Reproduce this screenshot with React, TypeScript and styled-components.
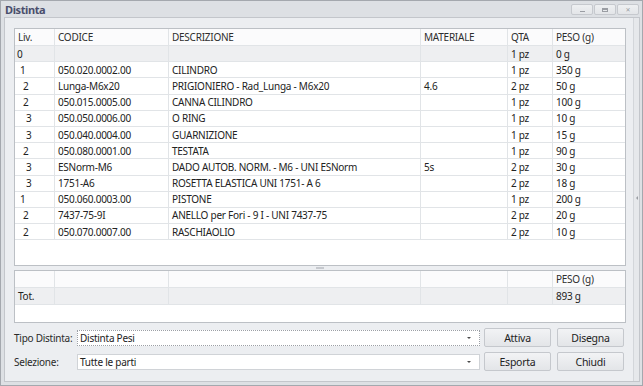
import React from 'react';
import styled, { createGlobalStyle } from 'styled-components';

const FONT = '"Noto Sans", "DejaVu Sans", sans-serif';

const GlobalStyle = createGlobalStyle`
  html, body { margin: 0; padding: 0; background: #ffffff; }
  * { box-sizing: border-box; }
  body { font-family: ${FONT}; font-size: 10px; color: #222222; letter-spacing: -0.25px; }
`;

const COLS = '40px 114px 252px 87px 45px 1fr';

const Window = styled.div`
  width: 643px;
  height: 386px;
  border: 1px solid #a4a8ae;
  background: #dde0e4;
  padding: 0 2px 3px 3px;
  display: flex;
  flex-direction: column;
`;

const TitleBar = styled.div`
  height: 16px;
  display: flex;
  align-items: flex-start;
  justify-content: space-between;
  padding: 0 1px 0 1px;
`;

const Title = styled.div`
  font-family: "Noto Sans", sans-serif;
  font-weight: bold;
  font-size: 11px;
  line-height: 17px;
  color: #4a4e6c;
  letter-spacing: -0.4px;
`;

const TitleButtons = styled.div`
  display: flex;
  gap: 1px;
  padding-top: 3px;
`;

const TitleButton = styled.div`
  width: 22px;
  height: 11px;
  border: 1px solid #c6c9ce;
  border-radius: 2px;
  background: linear-gradient(#eef0f2, #e3e5e8);
  display: flex;
  align-items: center;
  justify-content: center;
`;

const MinGlyph = styled.div`
  width: 5px;
  height: 1px;
  margin-top: 3px;
  background: #9a9da3;
`;

const MaxGlyph = styled.div`
  width: 6px;
  height: 4px;
  border: 1px solid #9a9da3;
  border-top-width: 2px;
`;

const CloseGlyph = styled.div`
  font-family: "DejaVu Sans", sans-serif;
  font-size: 6px;
  line-height: 7px;
  color: #9a9da3;
`;

const Body = styled.div`
  flex: 1;
  display: flex;
  border: 1px solid #c3c6cb;
  background: #eceef1;
`;

const Main = styled.div`
  flex: 1;
  display: flex;
  flex-direction: column;
  padding: 10px 7px 10px 9px;
`;

const Strip = styled.div`
  width: 6px;
  border-left: 1px solid #d3d6da;
  background: #e6e8eb;
  display: flex;
  align-items: center;
  justify-content: center;
`;

const StripArrow = styled.div`
  width: 0;
  height: 0;
  border-top: 2px solid transparent;
  border-bottom: 2px solid transparent;
  border-right: 2px solid #9a9da3;
  margin-top: -3px;
`;

const Grid = styled.div<{ $height: number }>`
  height: ${p => p.$height}px;
  border: 1px solid #bcc0c5;
  background: #ffffff;
  display: flex;
  flex-direction: column;
  overflow: hidden;
`;

const Row = styled.div<{ $height: number; $shade?: boolean }>`
  display: grid;
  grid-template-columns: ${COLS};
  height: ${p => p.$height}px;
  flex: none;
  border-bottom: 1px solid #e1e4e7;
  background: ${p => (p.$shade ? '#eeeff1' : '#ffffff')};
`;

const HeaderRow = styled(Row)`
  background: #fbfbfc;
  border-bottom: 1px solid #e1e4e7;
`;

const Cell = styled.div<{ $indent?: number }>`
  border-right: 1px solid #e1e4e7;
  padding: 0 3px 0 ${p => (p.$indent !== undefined ? p.$indent : 3)}px;
  display: flex;
  align-items: center;
  white-space: nowrap;
  overflow: hidden;
  font-size: 10px;
  color: #222222;
  &:last-child { border-right: none; }
`;

const HeadCell = styled(Cell)`
  color: #2e2e2e;
`;

const Splitter = styled.div`
  height: 4px;
  display: flex;
  align-items: center;
  justify-content: center;
`;

const SplitHandle = styled.div`
  width: 8px;
  height: 2px;
  background: #c6c9ce;
`;

const Controls = styled.div`
  margin-top: 5px;
  display: grid;
  grid-template-columns: 59px 403px 67px 69px;
  grid-template-rows: 19px 19px;
  column-gap: 4px;
  row-gap: 5px;
  align-items: center;
  & > :nth-child(4n) { margin-left: 2px; }
`;

const Label = styled.div`
  font-size: 10px;
  color: #2a2a2a;
  white-space: nowrap;
`;

const Combo = styled.div<{ $focused?: boolean }>`
  height: 16px;
  display: flex;
  align-items: stretch;
  background: #ffffff;
  border: 1px ${p => (p.$focused ? 'dotted #9ca0a6' : 'solid #d0d3d7')};
`;

const ComboText = styled.div`
  flex: 1;
  padding-left: 2px;
  display: flex;
  align-items: center;
  font-size: 10px;
  color: #222222;
`;

const ComboArrow = styled.div`
  width: 17px;
  display: flex;
  align-items: center;
  justify-content: center;
  padding-right: 3px;
  &::after {
    content: '';
    width: 0;
    height: 0;
    border-left: 2px solid transparent;
    border-right: 2px solid transparent;
    border-top: 2px solid #4a4a4a;
  }
`;

const Button = styled.div`
  height: 19px;
  border: 1px solid #c5c8cd;
  border-radius: 2px;
  background: linear-gradient(#f2f3f5, #e3e5e8);
  display: flex;
  align-items: center;
  justify-content: center;
  font-size: 10.5px;
  color: #222222;
`;

type Item = [number, string, string, string, string, string];

const ITEMS: Item[] = [
  [0, '', '', '', '1 pz', '0 g'],
  [1, '050.020.0002.00', 'CILINDRO', '', '1 pz', '350 g'],
  [2, 'Lunga-M6x20', 'PRIGIONIERO - Rad_Lunga - M6x20', '4.6', '2 pz', '50 g'],
  [2, '050.015.0005.00', 'CANNA CILINDRO', '', '1 pz', '100 g'],
  [3, '050.050.0006.00', 'O RING', '', '1 pz', '10 g'],
  [3, '050.040.0004.00', 'GUARNIZIONE', '', '1 pz', '15 g'],
  [2, '050.080.0001.00', 'TESTATA', '', '1 pz', '90 g'],
  [3, 'ESNorm-M6', 'DADO AUTOB. NORM. - M6 - UNI ESNorm', '5s', '2 pz', '30 g'],
  [3, '1751-A6', 'ROSETTA ELASTICA UNI 1751- A 6', '', '2 pz', '18 g'],
  [1, '050.060.0003.00', 'PISTONE', '', '1 pz', '200 g'],
  [2, '7437-75-9I', 'ANELLO per Fori - 9 I - UNI 7437-75', '', '2 pz', '20 g'],
  [2, '050.070.0007.00', 'RASCHIAOLIO', '', '2 pz', '10 g'],
];

const HEADERS = ['Liv.', 'CODICE', 'DESCRIZIONE', 'MATERIALE', 'QTA', 'PESO (g)'];

export default function App() {
  return (
    <>
      <GlobalStyle />
      <Window>
        <TitleBar>
          <Title>Distinta</Title>
          <TitleButtons>
            <TitleButton><MinGlyph /></TitleButton>
            <TitleButton><MaxGlyph /></TitleButton>
            <TitleButton><CloseGlyph>✕</CloseGlyph></TitleButton>
          </TitleButtons>
        </TitleBar>
        <Body>
          <Main>
            <Grid $height={238}>
              <HeaderRow $height={17}>
                {HEADERS.map(h => (
                  <HeadCell key={h}>{h}</HeadCell>
                ))}
              </HeaderRow>
              {ITEMS.map((it, i) => (
                <Row key={i} $height={16.2} $shade={i === 0}>
                  <Cell $indent={2 + it[0] * 3}>{it[0]}</Cell>
                  <Cell>{it[1]}</Cell>
                  <Cell>{it[2]}</Cell>
                  <Cell>{it[3]}</Cell>
                  <Cell>{it[4]}</Cell>
                  <Cell>{it[5]}</Cell>
                </Row>
              ))}
            </Grid>
            <Splitter>
              <SplitHandle />
            </Splitter>
            <Grid $height={53}>
              <HeaderRow $height={17}>
                <HeadCell />
                <HeadCell />
                <HeadCell />
                <HeadCell />
                <HeadCell />
                <HeadCell>PESO (g)</HeadCell>
              </HeaderRow>
              <Row $height={16.5} $shade>
                <Cell>Tot.</Cell>
                <Cell />
                <Cell />
                <Cell />
                <Cell />
                <Cell>893 g</Cell>
              </Row>
            </Grid>
            <Controls>
              <Label>Tipo Distinta:</Label>
              <Combo $focused>
                <ComboText>Distinta Pesi</ComboText>
                <ComboArrow />
              </Combo>
              <Button>Attiva</Button>
              <Button>Disegna</Button>
              <Label>Selezione:</Label>
              <Combo>
                <ComboText>Tutte le parti</ComboText>
                <ComboArrow />
              </Combo>
              <Button>Esporta</Button>
              <Button>Chiudi</Button>
            </Controls>
          </Main>
          <Strip>
            <StripArrow />
          </Strip>
        </Body>
      </Window>
    </>
  );
}
